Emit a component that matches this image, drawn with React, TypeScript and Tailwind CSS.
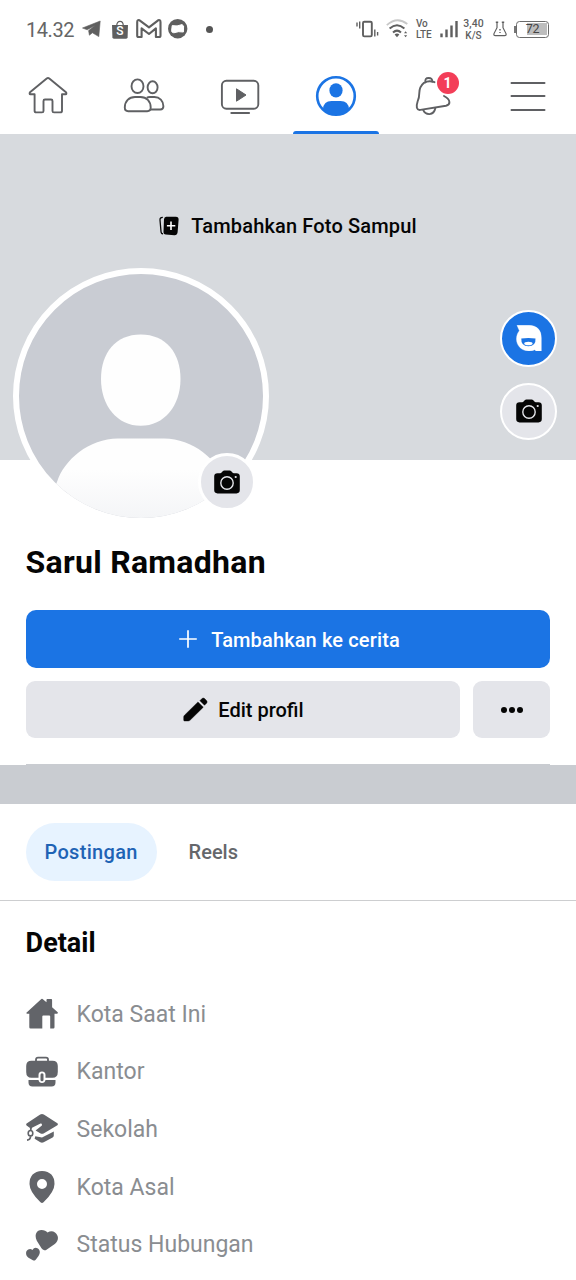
import type { ReactNode } from "react";

type DrawingProps = { box: string; className: string; children: ReactNode };

function Drawing({ box, className, children }: DrawingProps) {
  return (
    <svg viewBox={box} className={className} fill="none" aria-hidden="true">
      {children}
    </svg>
  );
}

function StatusBar() {
  return (
    <header className="flex h-[58px] shrink-0 items-center pl-[26px] text-[#5f5f5f]">
      <span className="w-[56px] pt-px text-[20px] leading-none tracking-[-0.45px] text-[#666]">14.32</span>
      <Drawing box="0 0 20 18" className="h-[18px] w-5">
        <path d="M.5 8 L18.2 1 L16.8 16.6 L10.4 12.8 L7.4 15.2 L6.6 10.6 L13 5.4 L5.2 9.8 Z" fill="currentColor" stroke="currentColor" strokeWidth=".6" strokeLinejoin="round" />
      </Drawing>
      <span className="relative ml-[10px] flex h-[19px] w-4 items-end justify-center">
        <Drawing box="0 0 16 19" className="absolute inset-0 h-[19px] w-4">
          <path d="M4.7 6 C4.7-.3 11.3-.3 11.3 6" stroke="currentColor" strokeWidth="1.2" />
          <path d="M0 5h16l-.4 12.3q-.1 1.4-1.5 1.4H1.900q-1.400 0-1.500-1.400Z" fill="currentColor" />
        </Drawing>
        <span className="relative mb-[2px] text-[12px] leading-[11px] font-medium text-white">S</span>
      </span>
      <Drawing box="0 0 26 20" className="ml-[8px] h-5 w-[26px]">
        <path d="M1.200 3.200v13.200q0 1.600 1.400 1.600h3V9.400L13 15l6.900-5.600V18h3.100q1.500 0 1.500-1.600V3.200q0-2.800-2.400-1.900L13 8.300 3.600 1.300Q1.200.4 1.200 3.200Z" stroke="currentColor" strokeWidth="2.100" strokeLinejoin="round" />
      </Drawing>
      <Drawing box="0 0 20 20" className="ml-[6px] h-5 w-5">
        <circle cx="9.700" cy="9.700" r="9.700" fill="currentColor" />
        <path d="M4.200 6.600q5 1.200 9.800-1l1.600 1.400-.2 6q-5-1-9.600.8Q3.400 13.400 3.600 11.800Z" fill="#fff" stroke="#fff" strokeLinejoin="round" />
      </Drawing>
      <span className="ml-[18px] h-[7px] w-[7px] rounded-full bg-[#555]" />

      <Drawing box="0 0 25 20" className="ml-[143px] h-5 w-[25px]">
        <rect x="7" y="2.800" width="8.800" height="14.600" rx="1.300" stroke="currentColor" strokeWidth="1.900" />
        <path d="M1 3.500v4M3.700 2.500v7M18.800 10.500v7M21.600 13v3.500" stroke="currentColor" strokeWidth="1.400" />
      </Drawing>
      <Drawing box="0 0 24 20" className="ml-[5px] h-5 w-6">
        <path d="M.8 6.200Q11-3 21.300 5" stroke="#c8c8c8" strokeWidth="1.800" />
        <path d="M3.600 9.500Q11 3 18.400 9.500M7 13.400Q11 9.800 15 13.400" stroke="currentColor" strokeWidth="2" />
        <path d="M8.600 15.500Q11 13.600 13.400 15.500L11 18.200Z" fill="currentColor" />
        <path d="M18 14.200l1.600-2 1.600 2ZM18 16.200l1.600 2 1.600-2Z" fill="currentColor" />
      </Drawing>
      <span className="ml-[6px] flex w-[18px] flex-col gap-px text-[10px] leading-[9px] font-medium tracking-[-0.2px]">
        <span className="h-[9px] leading-[8px]">Vo</span>
        <span className="h-[9px] leading-[9px]">LTE</span>
      </span>
      <Drawing box="0 0 18 18" className="ml-[6px] h-[18px] w-[18px]">
        <path d="M1.500 13.500v3.700M6.500 9.500v7.700M11.500 5.500v11.700M16.500 1v16.200" stroke="currentColor" strokeWidth="2.400" />
      </Drawing>
      <span className="ml-[4px] flex w-[23px] flex-col items-center text-[10.5px] leading-[12px] font-medium">
        <span>3,40</span>
        <span className="text-[10px] leading-[11px]">K/S</span>
      </span>
      <Drawing box="0 0 14 16" className="ml-[8px] h-4 w-[14px]">
        <path d="M4 1.500v5.200L1 12.600Q.4 14.700 2.400 14.700h9.200q2 0 1.400-2.100L10 6.700V1.500" stroke="currentColor" strokeWidth="1.200" />
        <path d="M2.800 1.200h2.400M8.800 1.200h2.400M7 8v1.500M7 11v1" stroke="currentColor" strokeWidth="1.400" />
      </Drawing>
      <span className="ml-[7px] h-[7px] w-[2px] bg-[#777]" />
      <span className="flex h-[17px] w-[33px] items-center rounded-[3.5px] border-[1.5px] border-[#6b6b6b] bg-white p-[1.5px] text-center text-[12.5px] leading-none tracking-[-0.4px] text-[#454545]">
        <span className="flex h-full w-full items-center justify-center bg-linear-to-r from-white from-28% to-[#bdbdbd] to-28%">72</span>
      </span>
    </header>
  );
}

function Tab({ children }: { children: ReactNode }) {
  return <button className="relative flex h-[76px] flex-1 items-center justify-center">{children}</button>;
}

function TabBar() {
  const icon = "h-12 w-12";
  return (
    <nav className="flex h-[76px] shrink-0 text-[#5f6063]">
      <Tab>
        <Drawing box="0 0 48 48" className={icon}>
          <path d="M22.700 6.400Q24 5.400 25.300 6.400L42 20.300Q43 22 41.500 22.300H38v16.400q0 1.700-1.700 1.700H30q-1.500 0-1.500-1.500V29q0-1.500-1.500-1.500h-6q-1.500 0-1.500 1.500v9.900q0 1.500-1.500 1.500h-5.800q-1.600 0-1.600-1.700V22.300H6.500Q5 22 6 20.300Z" stroke="currentColor" strokeWidth="1.900" strokeLinejoin="round" />
        </Drawing>
      </Tab>
      <Tab>
        <Drawing box="0 0 48 48" className={icon}>
          <g stroke="currentColor" strokeWidth="1.900">
            <ellipse cx="17.500" cy="14.200" rx="6" ry="6.800" />
            <ellipse cx="32.600" cy="15.300" rx="5" ry="6" />
            <path d="M4.800 35.500C4.800 29 9 25 15 25h5.500c6 0 10.200 4 10.200 10.500 0 2.600-1 3.700-3.500 3.700h-19c-2.500 0-3.400-1.100-3.400-3.700Z" />
            <path d="M26.800 25.800q1.200-.8 3-.8h4.600c5.200 0 9 3.800 9 9.300 0 2.300-.9 3.200-3.100 3.200h-9.800" />
          </g>
        </Drawing>
      </Tab>
      <Tab>
        <Drawing box="0 0 48 48" className={icon}>
          <rect x="5.900" y="8.800" width="36.400" height="27.900" rx="4.500" stroke="currentColor" strokeWidth="1.900" />
          <path d="M20.500 16.800 30 23l-9.500 6.200Z" fill="currentColor" stroke="currentColor" strokeLinejoin="round" />
          <path d="M15.300 41h17.800" stroke="currentColor" strokeWidth="1.900" strokeLinecap="round" />
        </Drawing>
      </Tab>
      <Tab>
        <Drawing box="0 0 48 48" className="h-12 w-12 text-[#1b74e4]">
          <circle cx="24" cy="24" r="18.800" stroke="currentColor" strokeWidth="2.600" />
          <ellipse cx="24" cy="18.400" rx="6.600" ry="7.200" fill="currentColor" />
          <path d="M11 37Q11.600 29 19.500 29h9Q36.400 29 37 37Q31.500 43 24 43T11 37Z" fill="currentColor" />
        </Drawing>
        <span className="absolute bottom-0 left-[5px] h-[3.5px] w-[86px] rounded-t-[3px] bg-[#1b74e4]" />
      </Tab>
      <Tab>
        <Drawing box="0 0 48 48" className={icon}>
          <g stroke="currentColor" strokeWidth="1.900" strokeLinecap="round" strokeLinejoin="round">
            <path d="M17.500 10.200Q16.600 6 20.600 6Q24.600 6 24.200 9.600" />
            <path d="M26.500 10.200Q21 8 16 10.800Q11.500 14.500 11.300 21Q11.300 25.500 9.600 29.500Q8.400 33 8.900 35.800Q9.700 38.400 12.400 37.900L38 33.700Q41.600 33 41.400 30Q41 26.500 36 24" />
            <path d="M15.300 38.200Q17 42.300 21.500 42.100Q26.300 41.600 27.300 36.300" />
          </g>
        </Drawing>
        <span className="absolute top-[14px] left-[53px] flex h-[22px] w-[22px] items-center justify-center rounded-full bg-[#f33e58] pr-px text-[14px] leading-none font-bold text-white">
          1
        </span>
      </Tab>
      <Tab>
        <Drawing box="0 0 48 48" className={icon}>
          <path d="M7.500 11h33M7.500 24h33M7.500 38h33" stroke="currentColor" strokeWidth="2" strokeLinecap="round" />
        </Drawing>
      </Tab>
    </nav>
  );
}

function Camera() {
  return (
    <Drawing box="0 0 26 24" className="h-6 w-[26px]">
      <path d="M3.500 3.200H6.200Q7 3.200 7.600 2.500L8.700 1.200Q9.300.4 10.400.4h5.200q1.100 0 1.700.8L18.400 2.500q.6.700 1.400.7h2.700q3.300 0 3.300 3.300v13.600q0 3.300-3.300 3.300h-19Q.2 23.400.2 20.100V6.500q0-3.300 3.300-3.300Z" fill="#050505" />
      <circle cx="13" cy="13" r="6.200" stroke="#e4e5ea" strokeWidth="1.400" />
      <circle cx="21.700" cy="7" r="1.100" fill="#e4e5ea" />
    </Drawing>
  );
}

function Cover() {
  return (
    <section className="relative h-[326px] shrink-0 bg-[#d7dade]">
      <button className="flex h-[183px] w-full items-center justify-center gap-3 text-[20px] font-medium text-[#050505]">
        <Drawing box="0 0 20 20" className="h-5 w-5">
          <path d="M3.800 1.300Q.8 1.200 1 4L2 15.500Q2.200 18 4 17.700" stroke="#050505" strokeWidth="1.300" />
          <path d="M7.200.8h9.600q3 .2 2.800 3l-1 12.500q-.4 3-3.200 2.900L6.800 18.500Q4.300 18.300 4.500 15.700L5 3.300Q5.200.8 7.200.8Z" fill="#050505" />
          <path d="M12 5.500v8.400M7.900 9.700h8.400" stroke="#fff" strokeWidth="1.600" />
        </Drawing>
        <span className="pt-px tracking-[0.15px]">Tambahkan Foto Sampul</span>
      </button>

      <div className="absolute top-[134px] left-[13px] h-[256px] w-[256px] overflow-hidden rounded-full border-6 border-white bg-[#c9ccd3]">
        <Drawing box="0 0 244 244" className="h-[244px] w-[244px]">
          <defs>
            <linearGradient id="torso" x1="0" y1="164" x2="0" y2="244" gradientUnits="userSpaceOnUse">
              <stop offset="0.4" stopColor="#fefefe" />
              <stop offset="1" stopColor="#f4f5f7" />
            </linearGradient>
          </defs>
          <path d="M121.700 60.500C147 60.500 161.500 79 161.500 105C161.500 132 145 151.800 121.700 151.800S82 132 82 105C82 79 96.500 60.500 121.700 60.500Z" fill="#fefefe" />
          <path d="M20 244L38 208C45 186 70 164.500 99 164.500H145C174 164.500 199 186 206 208L224 244Z" fill="url(#torso)" />
        </Drawing>
      </div>
      <button className="absolute top-[319px] left-[198px] flex h-[58px] w-[58px] items-center justify-center rounded-full border-3 border-white bg-[#e4e5ea]">
        <Camera />
      </button>

      <div className="absolute top-[175.5px] right-[19px] flex flex-col gap-4">
        <button className="flex h-[57px] w-[57px] items-center justify-center rounded-full border-[2.5px] border-white bg-[#1b74e4]">
          <Drawing box="0 0 26 26" className="h-[26px] w-[26px]">
            <path d="M1 .3H13Q25.300.8 25.300 13V26H20L18.800 24.800Q16.500 26 13 26C6 26 .5 21 .5 14C.5 10.300 2 7.500 3.400 5.800Z" fill="#fff" stroke="#fff" strokeWidth=".4" strokeLinejoin="round" />
            <path d="M5.300 13.600Q12.300 12.200 19.500 13.600Q20 21.300 12.400 21.300T5.300 13.600Z" fill="#1b74e4" />
            <ellipse cx="12.400" cy="18.500" rx="4.200" ry="1.800" fill="#fff" />
          </Drawing>
        </button>
        <button className="flex h-[57px] w-[57px] items-center justify-center rounded-full border-[2.5px] border-white bg-[#e4e5ea]">
          <Camera />
        </button>
      </div>
    </section>
  );
}

function ProfileHeader() {
  return (
    <section className="flex h-[305px] shrink-0 flex-col px-[25.6px] pt-[82px]">
      <h1 className="h-[68px] text-[32px] leading-[40px] font-bold tracking-[0.28px] text-[#050505]">Sarul Ramadhan</h1>
      <button className="flex h-[58px] shrink-0 items-center justify-center gap-[14px] rounded-[10px] bg-[#1b74e4] pl-[3px] text-[20px] font-medium text-white">
        <Drawing box="0 0 18 18" className="h-[18px] w-[18px]">
          <path d="M9 .2v17.600M.2 9h17.600" stroke="currentColor" strokeWidth="1.700" />
        </Drawing>
        <span className="pt-px tracking-[0.13px]">Tambahkan ke cerita</span>
      </button>
      <div className="mt-[13px] flex h-[57px] shrink-0 gap-[13px] text-[#050505]">
        <button className="flex flex-1 items-center justify-center gap-[10px] rounded-[9px] bg-[#e4e5ea] pl-px text-[20px] font-medium">
          <Drawing box="0 0 25 25" className="h-[25px] w-[25px]">
            <path d="M15 4.900 20.300 10.200 7 23.300Q6.200 24 5.100 24H1.600Q.7 24 .7 23.100V19.900Q.7 18.900 1.500 18.200ZM16.900 3.700 19 1.500Q20.400.5 21.600 1.600L23.700 3.800Q24.700 5 23.600 6.200L21.500 8.300Z" fill="currentColor" stroke="currentColor" strokeWidth=".4" />
          </Drawing>
          <span>Edit profil</span>
        </button>
        <button className="flex w-[77px] items-center justify-center gap-[2px] rounded-[9px] bg-[#e4e5ea]">
          <span className="h-[6px] w-[6px] rounded-full bg-[#050505]" />
          <span className="h-[6px] w-[6px] rounded-full bg-[#050505]" />
          <span className="h-[6px] w-[6px] rounded-full bg-[#050505]" />
        </button>
      </div>
      <div className="mt-auto h-px shrink-0 bg-[#c9ccd1]" />
    </section>
  );
}

const details = [
  {
    label: "Kota Saat Ini",
    icon: (
      <path d="M.4 14.700 14.800 1.400Q16 .3 17.200 1.400L20.500 4.300V1.800Q20.500.9 21.400.9H25.200Q26.100.9 26.100 1.800V9.300L31.700 14.300Q32.300 15.600 30.800 15.700H28.500V29.300Q28.500 30.500 27.300 30.500H24.200V18.500Q24.200 17.500 23.200 17.500H17.300Q16.300 17.500 16.300 18.500V30.500H4.500Q3.300 30.500 3.300 29.300V15.700H1.200Q.1 15.600.4 14.700Z" fill="currentColor" />
    ),
  },
  {
    label: "Kantor",
    icon: (
      <>
        <path d="M10 6V3.500Q10 1.600 12 1.600H20Q22 1.600 22 3.500V6" stroke="currentColor" strokeWidth="1.800" />
        <path d="M5.500 4.800H26.500Q31.800 4.800 31.800 10V16Q31.800 21.800 26.500 21.800H19.500V19Q19.500 15.500 16 15.500T12.500 19V21.800H5.500Q.2 21.800.2 16V10Q.2 4.800 5.500 4.800Z" fill="currentColor" />
        <path d="M2.500 24H12.500Q13 27 16 27T19.500 24H29.500V26.500Q29.500 30.600 25.500 30.600H6.500Q2.500 30.600 2.500 26.500Z" fill="currentColor" />
        <rect x="14.500" y="17.200" width="3" height="8" rx="1.500" fill="currentColor" />
      </>
    ),
  },
  {
    label: "Sekolah",
    icon: (
      <>
        <path d="M.6 10.600 14.200 1.600Q16 .6 17.800 1.600L31.400 10.300Q32.400 11.300 31.400 12.300L18 20.300Q16 21.300 14.200 20.300L9.600 17.600 15.900 12.400Q16.300 10.300 14.500 10.600L6.500 14.600Q5.600 15 5.400 16L.6 12.500Q-.3 11.500.6 10.600Z" fill="currentColor" />
        <path d="M9.300 23.300 16 24.600 27.800 18.600V22.500Q27.700 23.800 26.600 24.500L17.700 29.300Q16 30.200 14.300 29.300L8.600 25.800Z" fill="currentColor" />
        <ellipse cx="4.500" cy="20.200" rx="2.300" ry="2.700" stroke="currentColor" strokeWidth="1.600" />
        <path d="M4.800 17.200V14M4.600 23.300Q4.300 27 1 27.200" stroke="currentColor" strokeWidth="1.700" />
      </>
    ),
  },
  {
    label: "Kota Asal",
    icon: (
      <path fillRule="evenodd" d="M16 0Q28.500.7 28.500 13Q28.500 20.800 17.500 31.300Q16 32.500 14.500 31.300Q3.500 20.800 3.500 13Q3.500.7 16 0ZM16 8A5 5 0 1 0 16 18A5 5 0 1 0 16 8Z" fill="currentColor" />
    ),
  },
  {
    label: "Status Hubungan",
    icon: (
      <>
        <path d="M18.300 21.300Q16.600 21 15.500 19.300L10.800 11.800C8 6 10.500 1 15.200.9Q19.500.8 21.500 3.600Q25.500.8 29 3.400C33.500 7 32.400 12 28.800 15L20.500 20.800Q19.500 21.500 18.300 21.300Z" fill="currentColor" />
        <path d="M8.800 31.400Q8 31.700 6.900 31.200L2.500 28.700C-.6 26.500-.8 22 2.200 20.500Q4.600 19.400 6.400 21Q8.400 17.800 11.500 19.200C14.600 20.800 14.200 24.500 12.500 27.100L9.900 30.500Q9.500 31.100 8.800 31.400Z" fill="currentColor" />
      </>
    ),
  },
];

export default function App() {
  return (
    <main className="flex h-[1280px] w-[576px] flex-col overflow-hidden bg-white font-['Roboto',sans-serif]">
      <StatusBar />
      <TabBar />
      <Cover />
      <ProfileHeader />
      <div className="h-[39px] shrink-0 bg-[#c9ccd1]" />
      <div className="flex h-[97px] shrink-0 items-center gap-[13px] border-b border-[#cdced0] px-[25.6px] text-[20px] font-medium">
        <button className="h-[58px] w-[131px] rounded-full bg-[#e7f3ff] tracking-[0.3px] text-[#1f63b5]">Postingan</button>
        <button className="h-[58px] px-[19px] text-[#65676b]">Reels</button>
      </div>
      <section className="flex flex-col px-[25.6px] pt-[24px]">
        <h2 className="h-[60px] text-[27px] leading-[37px] font-bold text-[#050505]">Detail</h2>
        <ul className="flex flex-col">
          {details.map((item) => (
            <li key={item.label} className="flex h-[57.7px] items-center gap-[19px]">
              <Drawing box="0 0 32 32" className="h-8 w-8 text-[#626469]">
                {item.icon}
              </Drawing>
              <span className="pt-[2px] text-[23px] text-[#8a8d91]">{item.label}</span>
            </li>
          ))}
        </ul>
      </section>
    </main>
  );
}
